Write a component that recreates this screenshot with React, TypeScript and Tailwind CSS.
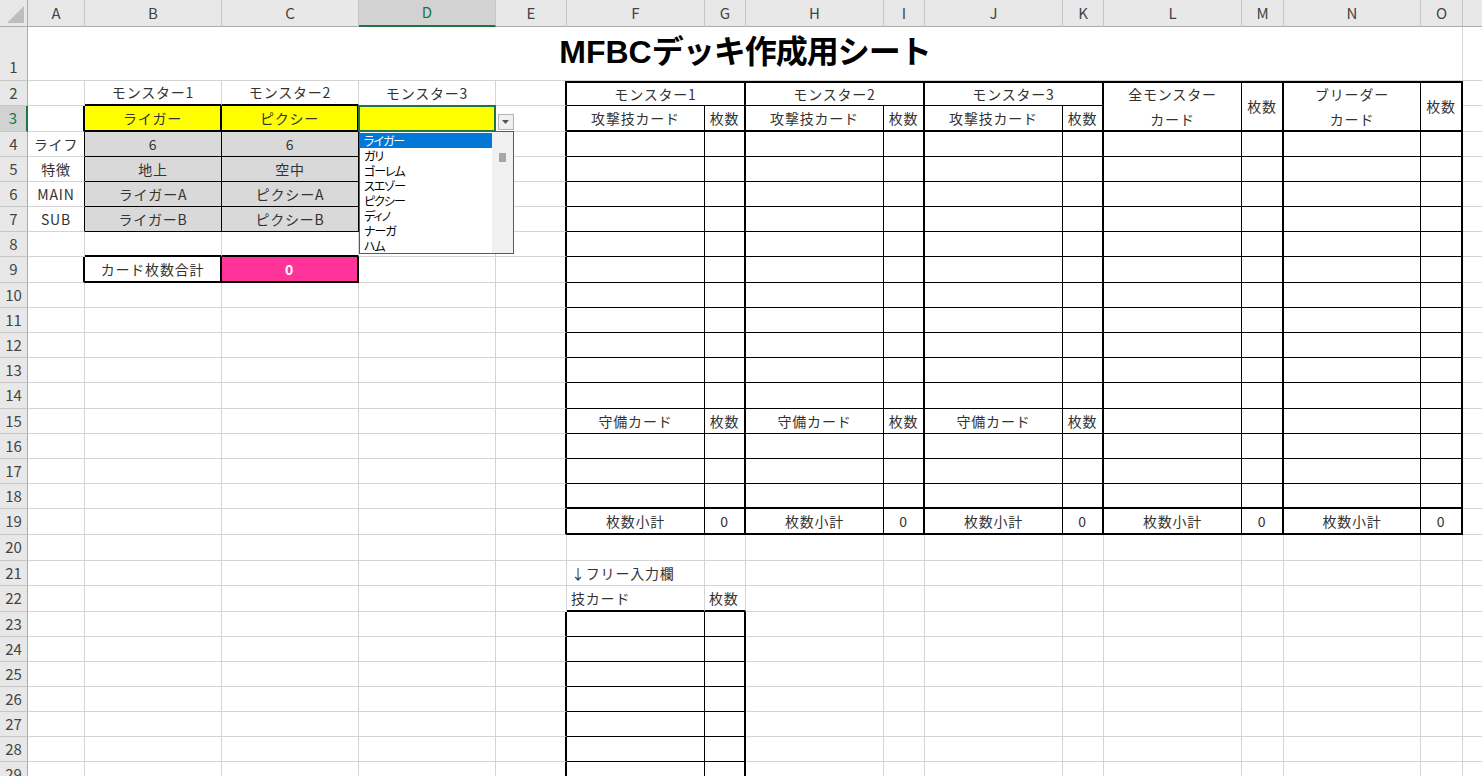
import type { ReactNode } from 'react'

type Line = 'g' | 't' | 'T'

const COLS = ['A', 'B', 'C', 'D', 'E', 'F', 'G', 'H', 'I', 'J', 'K', 'L', 'M', 'N', 'O', '']
const NROWS = 29

const RIGHT: Record<Line, string> = {
  g: 'border-r border-r-[#d4d4d4]',
  t: 'border-r border-r-black',
  T: 'border-r-2 border-r-black',
}

const BOTTOM: Record<Line, string> = {
  g: 'border-b border-b-[#d4d4d4]',
  t: 'border-b border-b-black',
  T: 'border-b-2 border-b-black',
}

const twoLine = (a: string, b: string) => (
  <span className="text-center leading-[25px]">
    {a}
    <br />
    {b}
  </span>
)

const TEXT: Record<string, ReactNode> = {
  '2-2': 'モンスター1',
  '2-3': 'モンスター2',
  '2-4': 'モンスター3',
  '3-2': 'ライガー',
  '3-3': 'ピクシー',
  '4-1': 'ライフ',
  '4-2': '6',
  '4-3': '6',
  '5-1': '特徴',
  '5-2': '地上',
  '5-3': '空中',
  '6-1': 'MAIN',
  '6-2': 'ライガーA',
  '6-3': 'ピクシーA',
  '7-1': 'SUB',
  '7-2': 'ライガーB',
  '7-3': 'ピクシーB',
  '9-2': 'カード枚数合計',
  '9-3': '0',
  '2-6': 'モンスター1',
  '2-8': 'モンスター2',
  '2-10': 'モンスター3',
  '2-12': twoLine('全モンスター', 'カード'),
  '2-13': '枚数',
  '2-14': twoLine('ブリーダー', 'カード'),
  '2-15': '枚数',
  '3-6': '攻撃技カード',
  '3-7': '枚数',
  '3-8': '攻撃技カード',
  '3-9': '枚数',
  '3-10': '攻撃技カード',
  '3-11': '枚数',
  '15-6': '守備カード',
  '15-7': '枚数',
  '15-8': '守備カード',
  '15-9': '枚数',
  '15-10': '守備カード',
  '15-11': '枚数',
  '19-6': '枚数小計',
  '19-7': '0',
  '19-8': '枚数小計',
  '19-9': '0',
  '19-10': '枚数小計',
  '19-11': '0',
  '19-12': '枚数小計',
  '19-13': '0',
  '19-14': '枚数小計',
  '19-15': '0',
  '21-6': '↓フリー入力欄',
  '22-6': '技カード',
  '22-7': '枚数',
}

const LEFT_ALIGNED = new Set(['21-6', '22-6', '22-7'])

// merged ranges: [lastRow, lastCol, span class]
const MERGE: Record<string, [number, number, string]> = {
  '1-1': [1, 15, 'col-span-15'],
  '2-6': [2, 7, 'col-span-2'],
  '2-8': [2, 9, 'col-span-2'],
  '2-10': [2, 11, 'col-span-2'],
  '2-12': [3, 12, 'row-span-2'],
  '2-13': [3, 13, 'row-span-2'],
  '2-14': [3, 14, 'row-span-2'],
  '2-15': [3, 15, 'row-span-2'],
}

function covered(r: number, c: number) {
  if (r === 1) return c >= 2 && c <= 15
  if (r === 2) return c === 7 || c === 9 || c === 11
  if (r === 3) return c >= 12 && c <= 15
  return false
}

function edges(r: number, c: number) {
  let rb: Line = 'g'
  let bb: Line = 'g'
  // monster picker block
  if ((r === 2 || r === 8) && (c === 2 || c === 3)) bb = 'T'
  if ((r === 3 || r === 9) && c >= 1 && c <= 3) rb = 'T'
  if ((r === 3 || r === 9) && (c === 2 || c === 3)) bb = 'T'
  if (r >= 4 && r <= 7 && c >= 1 && c <= 3) rb = 't'
  if (r >= 4 && r <= 7 && (c === 2 || c === 3)) bb = 't'
  // deck table
  if (r >= 2 && r <= 19) {
    if (c === 5) rb = 'T'
    if (c >= 6 && c <= 15) {
      rb = c % 2 === 1 ? 'T' : 't'
      bb = r === 3 || r >= 18 ? 'T' : 't'
    }
  }
  // free input
  if (r === 22 && (c === 6 || c === 7)) bb = 'T'
  if (r >= 23) {
    if (c === 5) rb = 'T'
    if (c === 6) {
      rb = 't'
      bb = 't'
    }
    if (c === 7) {
      rb = 'T'
      bb = 't'
    }
  }
  return { rb, bb }
}

function fill(r: number, c: number) {
  if (r === 3 && c >= 2 && c <= 4) return 'bg-[#ffff00]'
  if (r >= 4 && r <= 7 && (c === 2 || c === 3)) return 'bg-[#d9d9d9]'
  if (r === 9 && c === 3) return 'bg-[#ff3399] font-bold text-white'
  return 'bg-white'
}

const OPTIONS = ['ライガー', 'ガリ', 'ゴーレム', 'スエゾー', 'ピクシー', 'ディノ', 'ナーガ', 'ハム']

function Dropdown() {
  return (
    <>
      <div className="pointer-events-none absolute -inset-px z-10 border-2 border-[#217346]" />
      <div className="absolute left-[calc(100%+3px)] top-[8px] z-20 flex h-[16px] w-[16px] items-center justify-center border border-[#b4b4b4] bg-[#f0f0f0]">
        <svg width="8" height="5" viewBox="0 0 8 5">
          <path d="M0 0h7L3.5 4z" fill="#555" />
        </svg>
      </div>
      <div className="absolute left-0 top-full z-20 flex h-[123px] w-[155px] border border-[#5a5a5a] bg-white tracking-normal">
        <div className="flex flex-1 flex-col pt-px">
          {OPTIONS.map((o, i) => (
            <div
              key={o}
              className={`h-[15px] pl-[4px] text-[12px] leading-[15px] tracking-[-1px] [font-feature-settings:'palt'] ${
                i === 0 ? 'bg-[#0078d7] text-white' : 'text-black'
              }`}
            >
              {o}
            </div>
          ))}
        </div>
        <div className="w-[21px] bg-[#f0f0f0] pl-[7px] pt-[21px]">
          <div className="h-[9px] w-[7px] bg-[#a6a6a6]" />
        </div>
      </div>
    </>
  )
}

function Title() {
  return (
    <span className="pb-[3px] font-['Liberation_Sans','Noto_Sans_CJK_JP',sans-serif] text-[32px] font-bold tracking-normal text-black">
      MFBC<span className="tracking-[-1px]">デッキ作成用シート</span>
    </span>
  )
}

function Cell({ r, c }: { r: number; c: number }) {
  const key = `${r}-${c}`
  const merge = MERGE[key]
  const rEnd = merge ? merge[0] : r
  const cEnd = merge ? merge[1] : c
  const { rb } = edges(r, cEnd)
  const { bb } = edges(rEnd, c)
  const top = r === 2 && c >= 6 && c <= 15 ? 'border-t-2 border-t-black' : ''
  const align = LEFT_ALIGNED.has(key) ? 'justify-start pl-1' : 'justify-center'
  const isD3 = r === 3 && c === 4
  return (
    <div
      className={`flex items-center overflow-visible whitespace-nowrap ${align} ${RIGHT[rb]} ${BOTTOM[bb]} ${top} ${fill(
        r,
        c,
      )} ${merge ? merge[2] : ''} ${isD3 ? 'relative' : ''}`}
    >
      {key === '1-1' ? <Title /> : TEXT[key]}
      {isD3 && <Dropdown />}
    </div>
  )
}

export default function App() {
  const rows = Array.from({ length: NROWS }, (_, i) => i + 1)
  const cols = Array.from({ length: COLS.length }, (_, i) => i + 1)
  return (
    <div className="h-[776px] w-[1482px] overflow-hidden bg-white font-['Noto_Sans_CJK_JP',sans-serif] text-[14px] tracking-[0.8px] text-[#333]">
      <div className="grid grid-cols-[28px_57px_137px_137px_137px_71px_138px_41px_138px_41px_138px_41px_138px_42px_137px_42px_80px] grid-rows-[27px_54px_25px_26px_25px_25px_25px_25px_25px_26px_25px_25px_25px_25px_26px_25px_25px_25px_25px_26px_26px_25px_26px_25px_25px_25px_25px_25px_25px_25px]">
        {/* corner */}
        <div className="flex items-end justify-end border-r border-b border-r-[#ababab] border-b-[#ababab] bg-[#e8e8e8] pr-[3px] pb-[3px]">
          <svg width="17" height="17" viewBox="0 0 17 17">
            <path d="M17 0v17H0z" fill="#bdbdbd" />
          </svg>
        </div>
        {COLS.map((l, i) =>
          l === 'D' ? (
            <div
              key={i}
              className="flex items-center justify-center border-r border-b-2 border-r-[#c6c6c6] border-b-[#217346] bg-[#d2d2d2] text-[15px] tracking-normal text-[#217346]"
            >
              {l}
            </div>
          ) : (
            <div
              key={i}
              className="flex items-center justify-center border-r border-b border-r-[#c6c6c6] border-b-[#ababab] bg-[#e8e8e8] text-[15px] tracking-normal text-[#444]"
            >
              {l}
            </div>
          ),
        )}
        {rows.map((r) => (
          <div key={r} className="contents">
            {r === 3 ? (
              <div className="flex items-center justify-center border-r-2 border-b border-r-[#217346] border-b-[#c6c6c6] bg-[#d2d2d2] text-[15px] tracking-normal text-[#217346]">
                {r}
              </div>
            ) : (
              <div
                className={`flex justify-center border-r border-b border-r-[#ababab] border-b-[#c6c6c6] bg-[#e8e8e8] text-[15px] tracking-normal text-[#444] ${
                  r === 1 ? 'items-end pb-[2px]' : 'items-center'
                }`}
              >
                {r}
              </div>
            )}
            {cols.map((c) => (covered(r, c) ? null : <Cell key={c} r={r} c={c} />))}
          </div>
        ))}
      </div>
    </div>
  )
}
